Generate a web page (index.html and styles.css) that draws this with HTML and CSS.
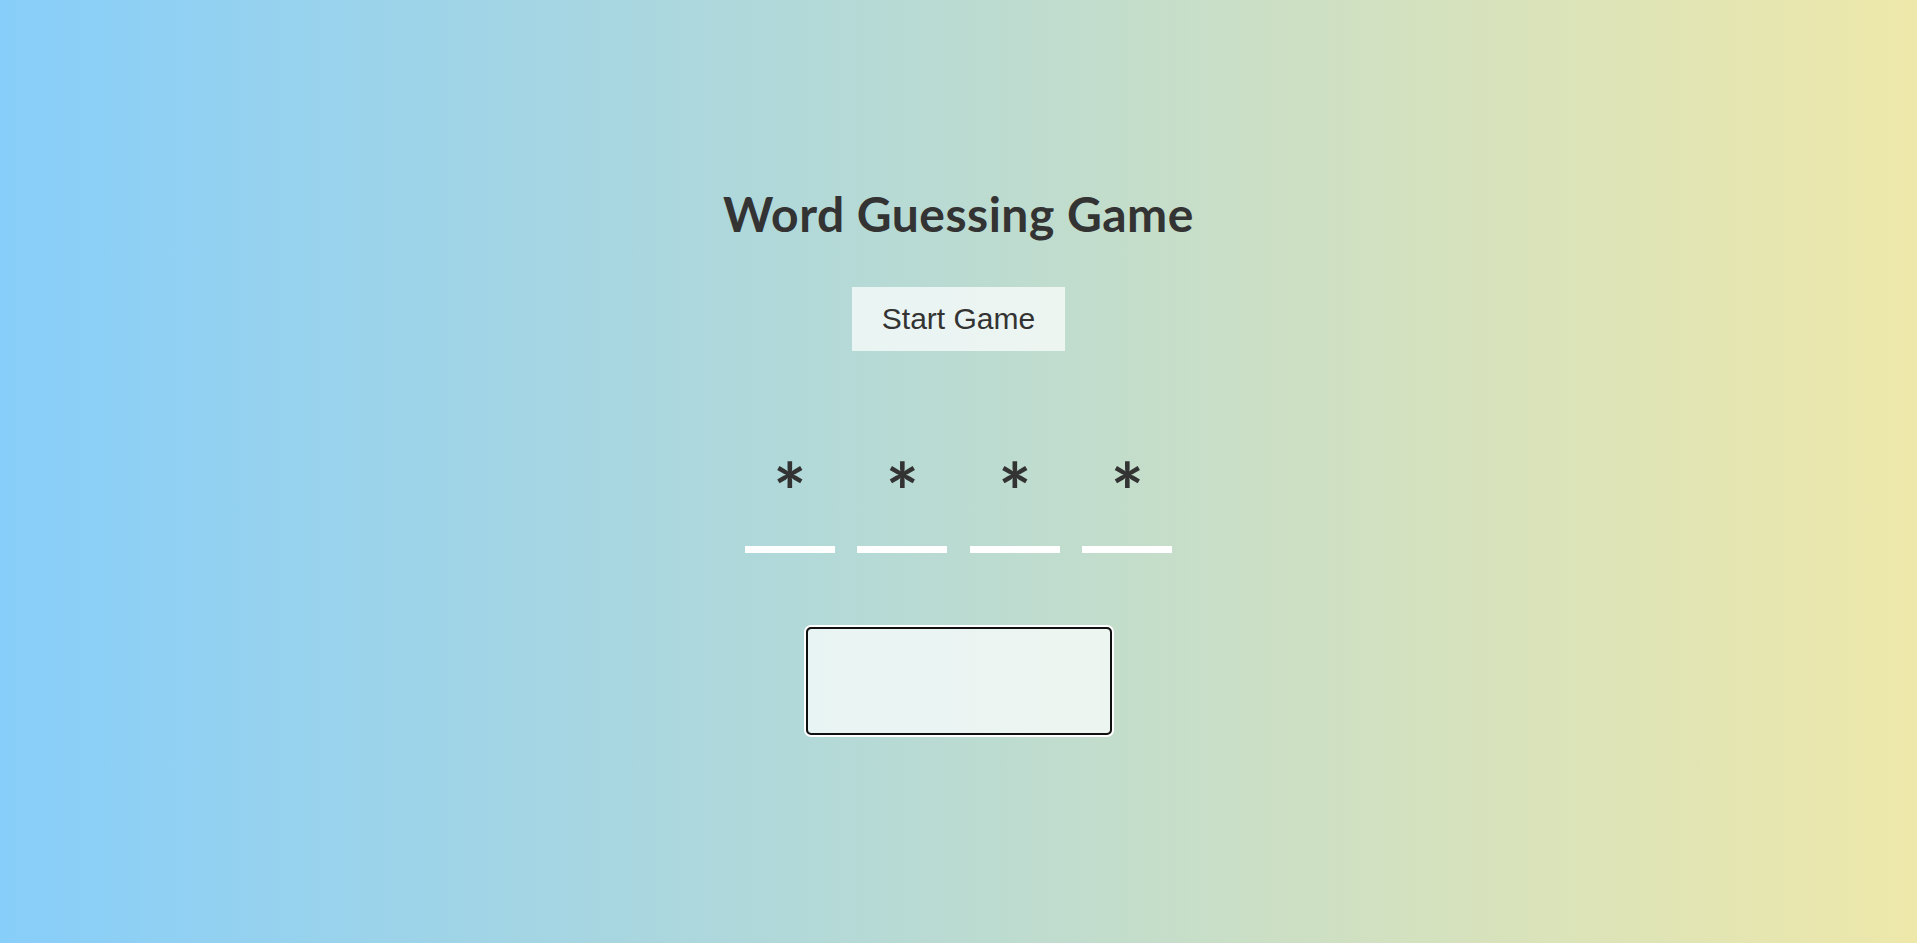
FILE: index.html
```html
<!DOCTYPE html>
<html lang="en">
<head>
<meta charset="utf-8">
<title>Word Guessing Game</title>
<link rel="stylesheet" href="styles.css">
</head>
<body>
<main class="game">
  <h1 class="title">Word Guessing Game</h1>
  <button class="start-btn" type="button">Start Game</button>
  <div class="word">
    <span class="letter">*</span>
    <span class="letter">*</span>
    <span class="letter">*</span>
    <span class="letter">*</span>
  </div>
  <input class="guess" type="text" aria-label="Your guess">
</main>
</body>
</html>
```

FILE: styles.css
```css
html, body {
  margin: 0;
  padding: 0;
  height: 100%;
}

body {
  background: linear-gradient(to right, #87cefa, #eee8aa);
  font-family: "Lato", "DejaVu Sans", sans-serif;
  color: #333333;
}

.game {
  display: flex;
  flex-direction: column;
  align-items: center;
  padding-top: 186px;
}

.title {
  margin: 0;
  font-size: 48px;
  font-weight: 700;
  line-height: 56px;
  letter-spacing: 0.5px;
}

.start-btn {
  margin-top: 45px;
  padding: 15px 30px;
  border: none;
  border-radius: 0;
  background: rgba(255, 255, 255, 0.7);
  color: #333333;
  font-family: "Liberation Sans", Arial, sans-serif;
  font-size: 30px;
  line-height: 34px;
  cursor: pointer;
}

.word {
  display: flex;
  gap: 22.5px;
  margin-top: 102px;
}

.letter {
  width: 90px;
  height: 100px;
  box-sizing: border-box;
  border-bottom: 7px solid #ffffff;
  text-align: center;
  font-size: 78px;
  font-weight: 700;
  line-height: 76px;
}

.guess {
  margin-top: 75px;
  width: 304px;
  height: 106px;
  box-sizing: border-box;
  border: 1px solid #767676;
  border-radius: 4px;
  outline: 2px solid #101010;
  outline-offset: -1px;
  box-shadow: 0 0 0 3px #ffffff;
  background: rgba(255, 255, 255, 0.7);
  font-size: 30px;
  text-align: center;
  color: #333333;
}
```
